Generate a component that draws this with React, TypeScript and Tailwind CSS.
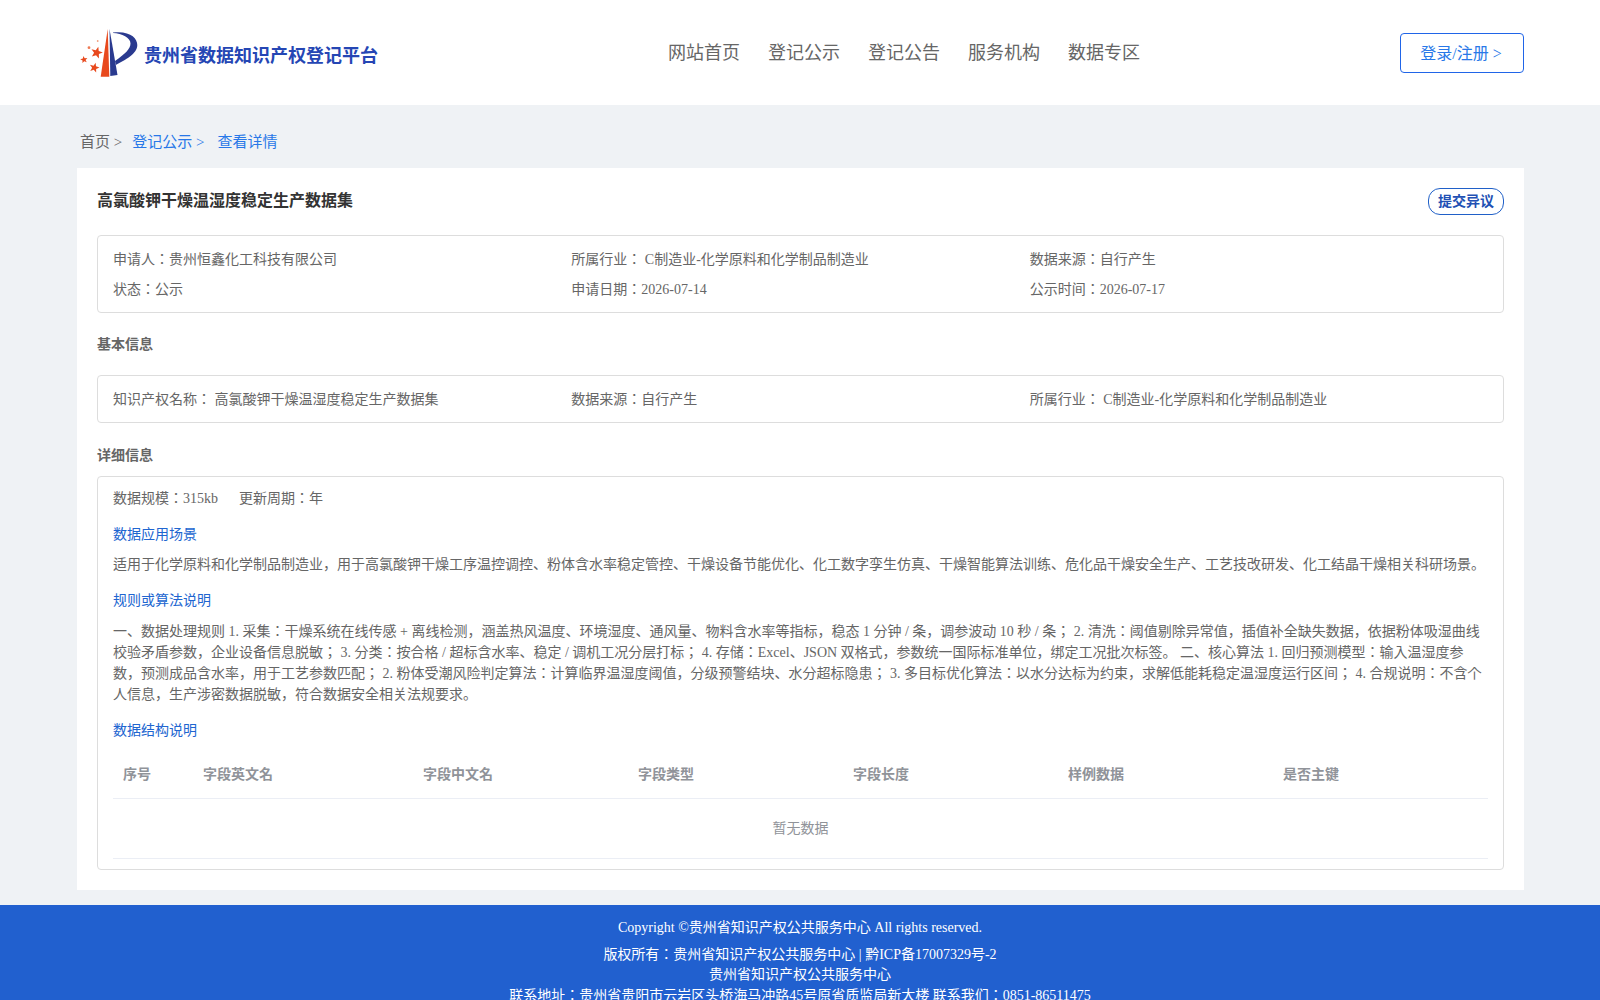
const navItems = ["网站首页", "登记公示", "登记公告", "服务机构", "数据专区"]
const tableHeads = [
    { label: "序号", width: "w-[80px]" },
    { label: "字段英文名", width: "w-[220px]" },
    { label: "字段中文名", width: "w-[215px]" },
    { label: "字段类型", width: "w-[215px]" },
    { label: "字段长度", width: "w-[215px]" },
    { label: "样例数据", width: "w-[215px]" },
    { label: "是否主键", width: "flex-1" },
]

function starPoints(cx: number, cy: number, r: number, rot: number) {
    const pts: string[] = []
    for (let i = 0; i < 10; i++) {
        const radius = i % 2 === 0 ? r : r * 0.42
        const angle = ((rot - 90 + i * 36) * Math.PI) / 180
        pts.push(`${(cx + radius * Math.cos(angle)).toFixed(2)},${(cy + radius * Math.sin(angle)).toFixed(2)}`)
    }
    return pts.join(" ")
}

function Logo() {
    return (
        <svg width="60" height="52" viewBox="0 0 60 52" className="shrink-0">
            <path d="M27.700 1 L20.700 48.700 L29.300 48.700 Z" fill="#e8491d" />
            <path d="M29.500 1 L30.300 48 L37.500 47 Z" fill="#2a3a8f" />
            <path d="M33 4.500 C50 2.500 57.300 10 57.300 17 C57.300 26 45 32 35.800 37 L35 33 C45 26 50.500 21 50.500 15.500 C50.500 9.500 42 5.500 33 5 Z" fill="#2a3a8f" />
            <polygon points={starPoints(16.7, 24.7, 6.2, 15)} fill="#e8491d" />
            <polygon points={starPoints(4, 31.7, 3.8, -10)} fill="#e8491d" />
            <polygon points={starPoints(14.3, 39.7, 5.2, 15)} fill="#e8491d" />
            <circle cx="9" cy="19.700" r="1.400" fill="#ee7a55" />
            <circle cx="17.700" cy="13" r="0.900" fill="#f0a080" />
        </svg>
    )
}

export default function App() {
    return (
        <div className="h-[1000px] overflow-hidden bg-[#eff2f5] font-['Liberation_Serif','Noto_Sans_CJK_JP',serif] text-[14px] text-[#666]">
            <header className="h-[105px] bg-white">
                <div className="ml-[77px] flex w-[1447px] items-start">
                    <div className="flex w-[591px] items-center pl-[3px] pt-[28px]">
                        <Logo />
                        <span className="ml-[4px] mt-[4px] text-[18px] leading-[24px] font-bold text-[#2546b4]">贵州省数据知识产权登记平台</span>
                    </div>
                    <nav className="flex gap-[28px] pt-[41px] text-[18px] leading-[24px] text-[#666]">
                        {navItems.map(item => <span key={item}>{item}</span>)}
                    </nav>
                    <div className="ml-auto pt-[33px]">
                        <div className="flex h-[40px] w-[124px] items-center justify-center rounded-[4px] border border-[#2065e8] pt-[2px] pr-[2px] text-[16px] text-[#2878e8]">登录/注册 &gt;</div>
                    </div>
                </div>
            </header>

            <main className="ml-[77px] w-[1447px]">
                <div className="flex h-[63px] items-center pl-[3px] pt-[12px] text-[15px]">
                    <span className="text-[#666]">首页 &gt;</span>
                    <span className="ml-[10px] text-[#2878e8]">登记公示 &gt;</span>
                    <span className="ml-[13px] text-[#2878e8]">查看详情</span>
                </div>

                <div className="h-[722px] bg-white px-[20px] pt-[20px]">
                    <div className="flex h-[47px] items-start justify-between">
                        <h1 className="mt-[1px] text-[16px] leading-[24px] font-bold text-[#333]">高氯酸钾干燥温湿度稳定生产数据集</h1>
                        <button className="h-[27px] w-[76px] rounded-[12px] border border-[#2060c8] text-[14px] font-bold text-[#2150b4]">提交异议</button>
                    </div>

                    <div className="grid h-[78px] grid-cols-3 content-start gap-y-[9px] rounded-[4px] border border-[#ddd] px-[15px] pt-[13px] leading-[21px]">
                        <div>申请人：贵州恒鑫化工科技有限公司</div>
                        <div>所属行业： C制造业-化学原料和化学制品制造业</div>
                        <div>数据来源：自行产生</div>
                        <div>状态：公示</div>
                        <div>申请日期：2026-07-14</div>
                        <div>公示时间：2026-07-17</div>
                    </div>

                    <h2 className="mt-[21px] h-[41px] leading-[22px] font-bold">基本信息</h2>
                    <div className="grid h-[48px] grid-cols-3 items-center rounded-[4px] border border-[#ddd] px-[15px] leading-[21px]">
                        <div>知识产权名称： 高氯酸钾干燥温湿度稳定生产数据集</div>
                        <div>数据来源：自行产生</div>
                        <div>所属行业： C制造业-化学原料和化学制品制造业</div>
                    </div>

                    <h2 className="mt-[22px] h-[31px] leading-[22px] font-bold">详细信息</h2>
                    <div className="h-[394px] rounded-[4px] border border-[#ddd] px-[15px] pt-[11px] leading-[21px]">
                        <div className="flex gap-[21px]">
                            <span>数据规模：315kb</span>
                            <span>更新周期：年</span>
                        </div>
                        <div className="mt-[15px] text-[#2065d0]">数据应用场景</div>
                        <p className="mt-[9px]">适用于化学原料和化学制品制造业，用于高氯酸钾干燥工序温控调控、粉体含水率稳定管控、干燥设备节能优化、化工数字孪生仿真、干燥智能算法训练、危化品干燥安全生产、工艺技改研发、化工结晶干燥相关科研场景。</p>
                        <div className="mt-[15px] text-[#2065d0]">规则或算法说明</div>
                        <p className="mt-[10px]">一、数据处理规则 1. 采集：干燥系统在线传感 + 离线检测，涵盖热风温度、环境湿度、通风量、物料含水率等指标，稳态 1 分钟 / 条，调参波动 10 秒 / 条； 2. 清洗：阈值剔除异常值，插值补全缺失数据，依据粉体吸湿曲线校验矛盾参数，企业设备信息脱敏； 3. 分类：按合格 / 超标含水率、稳定 / 调机工况分层打标； 4. 存储：Excel、JSON 双格式，参数统一国际标准单位，绑定工况批次标签。 二、核心算法 1. 回归预测模型：输入温湿度参数，预测成品含水率，用于工艺参数匹配； 2. 粉体受潮风险判定算法：计算临界温湿度阈值，分级预警结块、水分超标隐患； 3. 多目标优化算法：以水分达标为约束，求解低能耗稳定温湿度运行区间； 4. 合规说明：不含个人信息，生产涉密数据脱敏，符合数据安全相关法规要求。</p>
                        <div className="mt-[15px] text-[#2065d0]">数据结构说明</div>

                        <div className="mt-[9px] flex h-[49px] items-center border-b border-[#ebeef5] font-bold text-[#909399]">
                            {tableHeads.map(head => (
                                <div key={head.label} className={`${head.width} pl-[10px]`}>{head.label}</div>
                            ))}
                        </div>
                        <div className="flex h-[60px] items-center justify-center border-b border-[#ebeef5] text-[#909399]">暂无数据</div>
                    </div>
                </div>
            </main>

            <footer className="mt-[15px] h-[200px] bg-[#2160cf] pt-[12px] text-center leading-[21px] text-white">
                <div>Copyright ©贵州省知识产权公共服务中心 All rights reserved.</div>
                <div className="mt-[6px]">版权所有：贵州省知识产权公共服务中心 | 黔ICP备17007329号-2</div>
                <div className="mt-[-1px]">贵州省知识产权公共服务中心</div>
                <div>联系地址：贵州省贵阳市云岩区头桥海马冲路45号原省质监局新大楼 联系我们：0851-86511475</div>
            </footer>
        </div>
    )
}
